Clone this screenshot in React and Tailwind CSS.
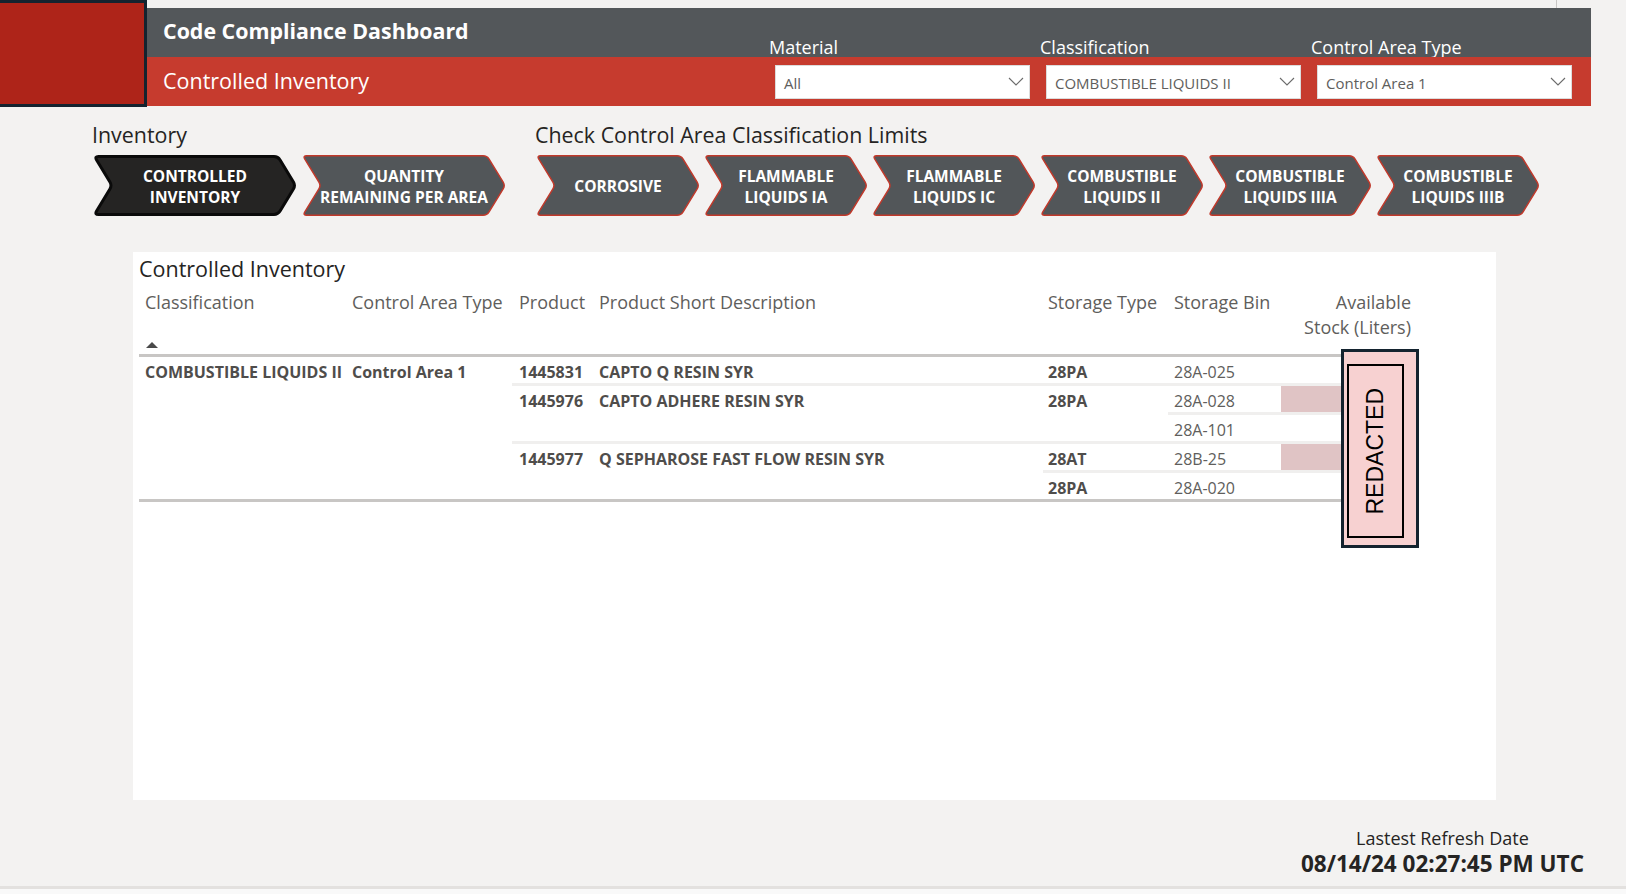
import React from "react";

function roundedPolyPath(pts, r) {
  const n = pts.length;
  let d = "";
  for (let i = 0; i < n; i++) {
    const p0 = pts[(i - 1 + n) % n];
    const p1 = pts[i];
    const p2 = pts[(i + 1) % n];
    const v1x = p0[0] - p1[0], v1y = p0[1] - p1[1];
    const v2x = p2[0] - p1[0], v2y = p2[1] - p1[1];
    const l1 = Math.hypot(v1x, v1y), l2 = Math.hypot(v2x, v2y);
    const ax = p1[0] + (v1x / l1) * r, ay = p1[1] + (v1y / l1) * r;
    const bx = p1[0] + (v2x / l2) * r, by = p1[1] + (v2y / l2) * r;
    d += `${i === 0 ? "M" : "L"}${ax.toFixed(2)} ${ay.toFixed(2)} Q${p1[0]} ${p1[1]} ${bx.toFixed(2)} ${by.toFixed(2)} `;
  }
  return d + "Z";
}

function Chevron({ w, lines, active, className }) {
  const h = 61;
  const s = active ? 3 : 1.5;
  const i = s / 2;
  const dep = 19;
  const pts = [
    [i, i],
    [w - dep, i],
    [w - i, h / 2],
    [w - dep, h - i],
    [i, h - i],
    [dep, h / 2],
  ];
  const d = roundedPolyPath(pts, 4);
  return (
    <div className={"relative shrink-0 h-[61px] flex items-center justify-center pt-[2px] " + className}>
      <svg className="absolute inset-0" width={w} height={h} viewBox={`0 0 ${w} ${h}`}>
        <path
          d={d}
          fill={active ? "#252423" : "#525659"}
          stroke={active ? "#0a0a0a" : "#c0392b"}
          strokeWidth={s}
          strokeLinejoin="round"
        />
      </svg>
      <div className="relative text-center text-white font-bold text-[15.5px] leading-[21px] whitespace-nowrap">
        {lines.map((l, k) => (
          <div key={k}>{l}</div>
        ))}
      </div>
    </div>
  );
}

function Dropdown({ value }) {
  return (
    <div className="ml-[6px] w-[255px] h-[34px] bg-white border border-[#dcdcdc] flex items-center justify-between pl-[8px] pr-[5px] pt-[3px] text-[15px] text-[#605e5c]">
      <span>{value}</span>
      <svg className="-mt-[3px]" width="16" height="9" viewBox="0 0 16 9">
        <polyline points="1,1 8,8 15,1" fill="none" stroke="#6b6b6b" strokeWidth="1.1" />
      </svg>
    </div>
  );
}

const C1 = "w-[207px] shrink-0 pl-[6px]";
const C2 = "w-[166px] shrink-0 pl-[6px]";
const C3 = "w-[81px] shrink-0 pl-[7px]";
const C4 = "w-[450px] shrink-0 pl-[6px]";
const C5 = "w-[125px] shrink-0 pl-[5px]";
const C6 = "w-[111px] shrink-0 pl-[6px]";
const C7 = "w-[138px] shrink-0";

const CELL = " pt-[4px] leading-[22px] text-[16px] whitespace-nowrap";
const BOLD = CELL + " font-bold text-[#4f4d4b]";

const products = [
  {
    id: "1445831",
    desc: "CAPTO Q RESIN SYR",
    types: [{ type: "28PA", bins: [{ bin: "28A-025", bar: false }] }],
  },
  {
    id: "1445976",
    desc: "CAPTO ADHERE RESIN SYR",
    types: [
      {
        type: "28PA",
        bins: [
          { bin: "28A-028", bar: true },
          { bin: "28A-101", bar: false },
        ],
      },
    ],
  },
  {
    id: "1445977",
    desc: "Q SEPHAROSE FAST FLOW RESIN SYR",
    types: [
      { type: "28AT", bins: [{ bin: "28B-25", bar: true }] },
      { type: "28PA", bins: [{ bin: "28A-020", bar: false }] },
    ],
  },
];

const SEP = "h-[3px] bg-[#f0efee]";

function ProductRow({ p }) {
  return (
    <div className="flex">
      <div className={C3 + BOLD}>{p.id}</div>
      <div className={C4 + BOLD}>{p.desc}</div>
      <div className="flex flex-col">
        {p.types.map((t, ti) => (
          <React.Fragment key={ti}>
            {ti > 0 && <div className={SEP} />}
            <div className="flex">
              <div className={C5 + BOLD}>{t.type}</div>
              <div className="flex flex-col">
                {t.bins.map((b, bi) => (
                  <React.Fragment key={bi}>
                    {bi > 0 && <div className={SEP} />}
                    <div className="flex h-[26px]">
                      <div className={C6 + CELL + " text-[#605e5c]"}>{b.bin}</div>
                      <div className="w-[2px] shrink-0" />
                      <div className={C7 + " flex"}>
                        {b.bar && <div className="w-[80px] h-full bg-[#e0c4c5]" />}
                      </div>
                    </div>
                  </React.Fragment>
                ))}
              </div>
            </div>
          </React.Fragment>
        ))}
      </div>
    </div>
  );
}

export default function App() {
  return (
    <div className="w-[1626px] h-[894px] overflow-hidden bg-[#f3f2f1] flex flex-col font-['Open_Sans',sans-serif]">
      {/* Top header */}
      <div className="flex shrink-0">
        <div className="w-[147px] h-[107px] shrink-0 bg-[#ae2419] border-t-[3px] border-r-[3px] border-b-[3px] border-[#14232f]" />
        <div className="flex-1 flex flex-col">
          <div className="h-[8px] flex justify-end pr-[69px]">
            <div className="w-px h-full bg-[#c8c6c4]" />
          </div>
          <div className="mr-[35px] flex flex-col">
            <div className="h-[49px] bg-[#53575a] flex">
              <div className="flex-1 pl-[16px] flex items-center text-white font-bold text-[21.4px] pb-[2px]">
                Code Compliance Dashboard
              </div>
              <div className="flex items-end pr-[9px]">
                {["Material", "Classification", "Control Area Type"].map((l) => (
                  <div key={l} className="w-[271px] text-[18px] leading-[20px] text-white">
                    {l}
                  </div>
                ))}
              </div>
            </div>
            <div className="h-[49px] bg-[#c63b2e] flex">
              <div className="flex-1 pl-[16px] flex items-center text-white text-[21.5px]">
                Controlled Inventory
              </div>
              <div className="flex items-center pr-[9px]">
                {["All", "COMBUSTIBLE LIQUIDS II", "Control Area 1"].map((v) => (
                  <div key={v} className="w-[271px]">
                    <Dropdown value={v} />
                  </div>
                ))}
              </div>
            </div>
          </div>
        </div>
      </div>

      {/* Navigation */}
      <div className="flex pl-[93px] mt-[13px] shrink-0">
        <div className="flex flex-col">
          <div className="text-[21.4px] leading-[30px] text-[#252423] -ml-px">Inventory</div>
          <div className="flex gap-[5px] mt-[5px]">
            <Chevron w={204} className="w-[204px]" active lines={["CONTROLLED", "INVENTORY"]} />
            <Chevron w={204} className="w-[204px]" lines={["QUANTITY", "REMAINING PER AREA"]} />
          </div>
        </div>
        <div className="flex flex-col ml-[30px]">
          <div className="text-[21.4px] leading-[30px] text-[#252423] -ml-px">
            Check Control Area Classification Limits
          </div>
          <div className="flex gap-[4px] mt-[5px]">
            <Chevron w={164} className="w-[164px]" lines={["CORROSIVE"]} />
            <Chevron w={164} className="w-[164px]" lines={["FLAMMABLE", "LIQUIDS IA"]} />
            <Chevron w={164} className="w-[164px]" lines={["FLAMMABLE", "LIQUIDS IC"]} />
            <Chevron w={164} className="w-[164px]" lines={["COMBUSTIBLE", "LIQUIDS II"]} />
            <Chevron w={164} className="w-[164px]" lines={["COMBUSTIBLE", "LIQUIDS IIIA"]} />
            <Chevron w={164} className="w-[164px]" lines={["COMBUSTIBLE", "LIQUIDS IIIB"]} />
          </div>
        </div>
      </div>

      {/* Card */}
      <div className="relative ml-[133px] mt-[36px] w-[1363px] h-[548px] shrink-0 bg-white pl-[6px]">
        <div className="text-[21.5px] leading-[30px] pt-[2px] h-[30px] text-[#252423]">Controlled Inventory</div>
        <div className="w-[1280px]">
          {/* header */}
          <div className="flex h-[75px] border-b-[3px] border-[#c8c6c4] text-[18px] leading-[25px] text-[#605e5c]">
            <div className={C1 + " flex flex-col justify-between pt-[8px] pb-[6px]"}>
              <div>Classification</div>
              <svg className="ml-px" width="12" height="6" viewBox="0 0 12 6">
                <polygon points="0,6 6,0 12,6" fill="#4a4a4a" />
              </svg>
            </div>
            <div className={C2 + " pt-[8px] whitespace-nowrap"}>Control Area Type</div>
            <div className={C3 + " pt-[8px]"}>Product</div>
            <div className={C4 + " pt-[8px]"}>Product Short Description</div>
            <div className={C5 + " pt-[8px] whitespace-nowrap"}>Storage Type</div>
            <div className={C6 + " pt-[8px] whitespace-nowrap"}>Storage Bin</div>
            <div className="w-[2px] shrink-0" />
            <div className={C7 + " pt-[8px] pr-[8px] text-right"}>
              Available
              <br />
              Stock (Liters)
            </div>
          </div>
          {/* body */}
          <div className="flex border-b-[3px] border-[#c8c6c4]">
            <div className={C1 + BOLD}>COMBUSTIBLE LIQUIDS II</div>
            <div className={C2 + BOLD}>Control Area 1</div>
            <div className="flex flex-col">
              {products.map((p, i) => (
                <React.Fragment key={p.id}>
                  {i > 0 && <div className={SEP} />}
                  <ProductRow p={p} />
                </React.Fragment>
              ))}
            </div>
          </div>
        </div>

        {/* Redacted overlay */}
        <div className="absolute left-[1208px] top-[97px] w-[78px] h-[199px] border-[3px] border-[#14232f] bg-[#f7d1d1] flex pl-[3px] pr-[12px] pt-[12px] pb-[7px]">
          <div className="flex-1 border-2 border-black flex items-center justify-center">
            <span className="[writing-mode:vertical-rl] rotate-180 font-['Liberation_Sans',Arial,sans-serif] text-[23px] text-black leading-none">
              REDACTED
            </span>
          </div>
        </div>
      </div>

      {/* Footer */}
      <div className="flex justify-end pr-[42px] mt-[26px] shrink-0">
        <div className="flex flex-col items-center">
          <div className="text-[18px] leading-[24px] text-[#252423]">Lastest Refresh Date</div>
          <div className="text-[22.5px] leading-[28px] font-bold text-[#252423]">08/14/24 02:27:45 PM UTC</div>
        </div>
      </div>

      <div className="mt-auto h-[8px] shrink-0 border-t-[3px] border-[#e3e1df] bg-[#f9f9f9]" />
    </div>
  );
}
